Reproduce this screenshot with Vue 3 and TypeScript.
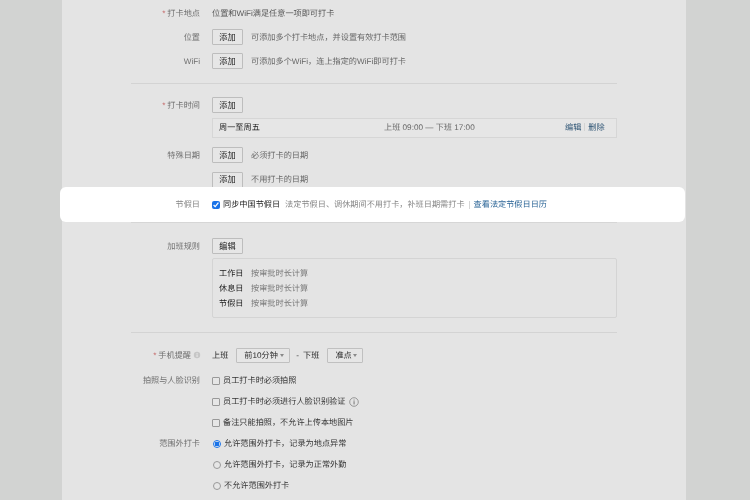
<script setup lang="ts">
const days = ['工作日', '休息日', '节假日']
const overtime = days.map((day) => ({ day, rule: '按审批时长计算' }))
</script>

<template>
  <main class="panel">
    <section class="group first">
      <div class="row">
        <label class="label"><i class="req">*</i>打卡地点</label>
        <span class="note">位置和WiFi满足任意一项即可打卡</span>
      </div>
      <div class="row">
        <label class="label">位置</label>
        <button class="btn">添加</button>
        <span class="hint">可添加多个打卡地点，并设置有效打卡范围</span>
      </div>
      <div class="row">
        <label class="label">WiFi</label>
        <button class="btn">添加</button>
        <span class="hint">可添加多个WiFi，连上指定的WiFi即可打卡</span>
      </div>
    </section>

    <section class="group second">
      <div class="row">
        <label class="label"><i class="req">*</i>打卡时间</label>
        <button class="btn">添加</button>
      </div>
      <div class="week">
        <strong class="week-name">周一至周五</strong>
        <span class="week-time">上班 09:00 — 下班 17:00</span>
        <span class="week-links"><a>编辑</a><b></b><a>删除</a></span>
      </div>
      <div class="row special">
        <label class="label">特殊日期</label>
        <button class="btn">添加</button>
        <span class="hint">必须打卡的日期</span>
      </div>
      <div class="row special special-b">
        <label class="label"></label>
        <button class="btn">添加</button>
        <span class="hint">不用打卡的日期</span>
      </div>
    </section>

    <section class="holiday">
      <label class="label light">节假日</label>
      <input class="native" type="checkbox" checked />
      <span class="sync">同步中国节假日</span>
      <span class="holiday-hint">法定节假日、调休期间不用打卡，补班日期需打卡</span>
      <b class="sep"></b>
      <a class="holiday-link">查看法定节假日日历</a>
    </section>

    <section class="group third">
      <div class="row">
        <label class="label">加班规则</label>
        <button class="btn">编辑</button>
      </div>
      <div class="rules">
        <div v-for="item in overtime" :key="item.day" class="rule">
          <strong>{{ item.day }}</strong><span>{{ item.rule }}</span>
        </div>
      </div>
    </section>

    <section class="group last">
      <div class="row">
        <label class="label">
          <i class="req">*</i>手机提醒
          <svg class="dot" viewBox="0 0 8 8"><circle cx="4" cy="4" r="3.2" fill="#c6c6c6" /><rect x="3.6" y="3.4" width="0.9" height="2.6" fill="#eee" /><rect x="3.6" y="2" width="0.9" height="0.9" fill="#eee" /></svg>
        </label>
        <span class="plain">上班</span>
        <span class="select wide">前10分钟<i></i></span>
        <span class="dash">-</span>
        <span class="plain">下班</span>
        <span class="select narrow">准点<i></i></span>
      </div>
      <div class="row opt opt-first">
        <label class="label">拍照与人脸识别</label>
        <input class="check" type="checkbox" />
        <span class="opt-text">员工打卡时必须拍照</span>
      </div>
      <div class="row opt">
        <label class="label"></label>
        <input class="check" type="checkbox" />
        <span class="opt-text">员工打卡时必须进行人脸识别验证</span>
        <svg class="info" viewBox="0 0 10 10"><circle cx="5" cy="5" r="4.3" fill="none" stroke="#777" stroke-width="0.7" /><rect x="4.6" y="4.2" width="0.9" height="3.2" fill="#666" /><rect x="4.6" y="2.6" width="0.9" height="0.9" fill="#666" /></svg>
      </div>
      <div class="row opt">
        <label class="label"></label>
        <input class="check" type="checkbox" />
        <span class="opt-text">备注只能拍照，不允许上传本地图片</span>
      </div>
      <div class="row opt">
        <label class="label">范围外打卡</label>
        <input class="radio on" type="radio" name="scope" checked />
        <span class="opt-text">允许范围外打卡，记录为地点异常</span>
      </div>
      <div class="row opt">
        <label class="label"></label>
        <input class="radio" type="radio" name="scope" />
        <span class="opt-text">允许范围外打卡，记录为正常外勤</span>
      </div>
      <div class="row opt">
        <label class="label"></label>
        <input class="radio" type="radio" name="scope" />
        <span class="opt-text">不允许范围外打卡</span>
      </div>
    </section>
  </main>
</template>

<style>
html,
body {
  margin: 0;
  height: 500px;
  overflow: hidden;
  background: #d2d3d2;
}
</style>

<style scoped>
.panel {
  width: 624px;
  height: 500px;
  margin-left: 62px;
  background: #e4e4e4;
  font: 8.16px "Liberation Sans", "Noto Sans CJK SC", sans-serif;
  text-rendering: geometricPrecision;
  color: #5a5a5a;
  filter: blur(0.25px);
}
.group {
  display: flex;
  flex-direction: column;
  margin-left: 69px;
  margin-right: 69px;
}
.first {
  padding-top: 5px;
  padding-bottom: 14px;
  gap: 8px;
  border-bottom: 1px solid #d3d3d3;
}
.second {
  padding-top: 13px;
}
.row {
  display: flex;
  align-items: center;
  height: 16px;
  margin-left: -69px;
}
.label {
  display: flex;
  align-items: center;
  justify-content: flex-end;
  flex: none;
  width: 138px;
  margin-right: 12px;
  color: #6e6e6e;
}
.req {
  margin-right: 2px;
  font-style: normal;
  color: #c56a6a;
}
.note {
  color: #555;
}
.btn {
  flex: none;
  box-sizing: border-box;
  width: 31px;
  height: 16px;
  padding: 0 0 2px;
  border: 1px solid #bdbdbd;
  border-radius: 1px;
  background: #e6e6e6;
  font: inherit;
  color: #222;
}
.hint {
  margin-left: 8px;
  color: #666;
}
.week {
  display: flex;
  align-items: center;
  box-sizing: border-box;
  height: 20px;
  margin-top: 5px;
  margin-left: 81px;
  padding-left: 6px;
  padding-bottom: 2px;
  border: 1px solid #d6d6d6;
  background: #e6e6e6;
}
.week-name {
  width: 165px;
  font-weight: 400;
  color: #1a1a1a;
}
.week-time {
  width: 181px;
  color: #666;
}
.week-links {
  display: flex;
  align-items: center;
  gap: 3px;
}
.week-links a {
  color: #2f5575;
}
.week-links b {
  width: 1px;
  height: 8px;
  background: #d2d2d2;
}
.special {
  margin-top: 9px;
}
.special-b {
  height: 15px;
}
.holiday {
  position: relative;
  display: flex;
  align-items: center;
  box-sizing: border-box;
  width: 625px;
  height: 35px;
  margin-left: -2px;
  padding-left: 2px;
  border-radius: 6px;
  background: #fff;
}
.light {
  color: #858585;
}
.native {
  flex: none;
  width: 8px;
  height: 8px;
  margin: 0;
  accent-color: #1a73e8;
}
.check,
.radio {
  flex: none;
  appearance: none;
  box-sizing: border-box;
  margin: 0;
  border: 1px solid #999;
  background: #e6e6e6;
}
.check {
  width: 8px;
  height: 8px;
  border-radius: 1px;
}
.radio {
  width: 8px;
  height: 8px;
  margin-left: 1px;
  border-radius: 50%;
}
.radio.on {
  border-color: #1a73e8;
  background: radial-gradient(circle, #1a73e8 0 2.2px, #f2f2f2 2.6px);
}
.sync {
  margin-left: 3px;
  color: #1c1c1c;
}
.holiday-hint {
  margin-left: 5px;
  color: #868686;
}
.sep {
  width: 1px;
  height: 8px;
  margin: 0 4px;
  background: #d6d6d6;
}
.holiday-link {
  color: #2a6496;
}
.third {
  padding-top: 15px;
  padding-bottom: 14px;
  border-top: 1px solid #d6d6d6;
  border-bottom: 1px solid #d3d3d3;
}
.rules {
  display: flex;
  flex-direction: column;
  justify-content: center;
  gap: 3px;
  box-sizing: border-box;
  height: 60px;
  margin-top: 4px;
  margin-left: 81px;
  padding-left: 6px;
  padding-top: 1px;
  border: 1px solid #d4d4d4;
  border-radius: 2px;
}
.rule {
  display: flex;
  height: 12px;
  align-items: center;
}
.rule strong {
  width: 32px;
  font-weight: 400;
  color: #1a1a1a;
}
.rule span {
  color: #7a7a7a;
}
.last {
  padding-top: 14px;
}
.plain {
  color: #1a1a1a;
}
.dot {
  width: 8px;
  height: 8px;
  margin-left: 2px;
  margin-right: -1px;
}
.select {
  display: flex;
  align-items: center;
  justify-content: space-between;
  box-sizing: border-box;
  height: 15px;
  padding: 0 5px 0 7px;
  border: 1px solid #c0c0c0;
  border-radius: 1px;
  background: #e6e6e6;
  color: #2a2a2a;
}
.select i {
  width: 0;
  height: 0;
  border-left: 2px solid transparent;
  border-right: 2px solid transparent;
  border-top: 3px solid #8a8a8a;
}
.wide {
  width: 54px;
  margin-left: 8px;
}
.narrow {
  width: 36px;
  margin-left: 8px;
}
.dash {
  margin: 0 4px 0 6px;
  color: #444;
}
.opt {
  height: 21px;
}
.opt-first {
  margin-top: 7px;
}
.opt-text {
  margin-left: 3px;
  color: #333;
}
.info {
  width: 10px;
  height: 10px;
  margin-left: 4px;
}
</style>
